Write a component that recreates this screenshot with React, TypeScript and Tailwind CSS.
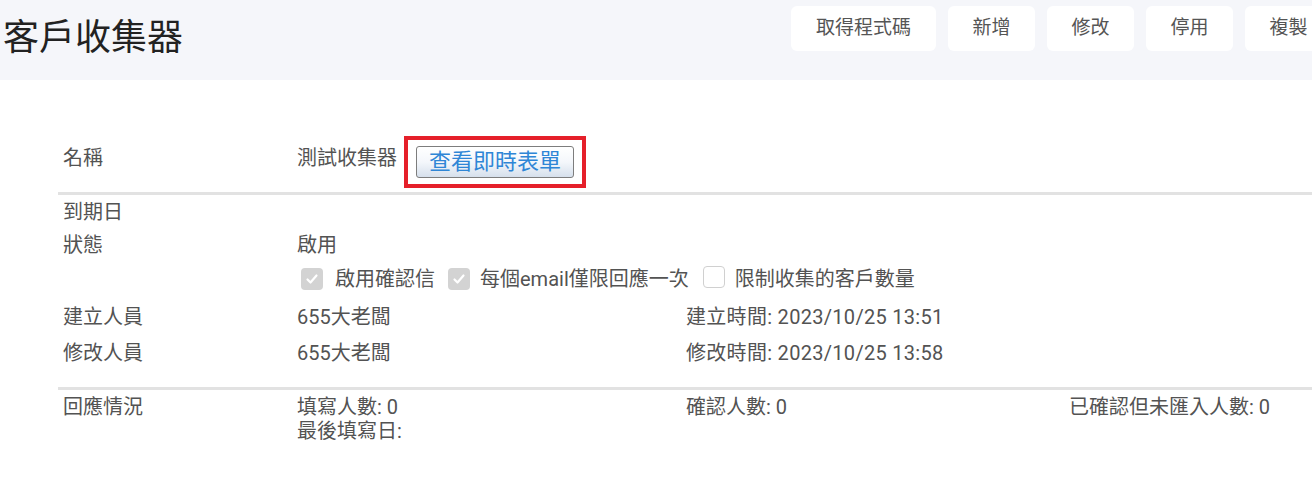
import React from "react";

const font = { fontFamily: '"Roboto", "Noto Sans CJK TC", sans-serif' };

function Check({ checked }: { checked: boolean }) {
  return checked ? (
    <span className="inline-flex h-[22px] w-[22px] shrink-0 items-center justify-center rounded-[4px] bg-[#d3d3d3]">
      <svg width="14" height="14" viewBox="0 0 14 14" fill="none">
        <path d="M2.5 7.5 L5.5 10.5 L11.5 3.5" stroke="#ffffff" strokeWidth="2.2" strokeLinecap="round" strokeLinejoin="round" />
      </svg>
    </span>
  ) : (
    <span className="inline-block h-[22px] w-[22px] shrink-0 rounded-[4px] border border-[#d0d0d0] bg-white" />
  );
}

function HeaderBtn({ children, w }: { children: React.ReactNode; w: string }) {
  return (
    <div className={`flex h-[45px] shrink-0 items-center justify-center rounded-[6px] bg-white text-[19px] text-[#555] ${w}`}>
      {children}
    </div>
  );
}

export default function App() {
  return (
    <div className="h-[490px] w-[1312px] overflow-hidden bg-white" style={font}>
      {/* header */}
      <div className="flex h-[80px] items-start bg-[#f5f6fa]">
        <div className="w-[791px] shrink-0 pl-[3px] pt-[14px] text-[36px] leading-[48px] text-[#222]">客戶收集器</div>
        <div className="mt-[6px] flex shrink-0 gap-[12px]">
          <HeaderBtn w="w-[145px]">取得程式碼</HeaderBtn>
          <HeaderBtn w="w-[87px]">新增</HeaderBtn>
          <HeaderBtn w="w-[87px]">修改</HeaderBtn>
          <HeaderBtn w="w-[87px]">停用</HeaderBtn>
          <HeaderBtn w="w-[87px]">複製</HeaderBtn>
        </div>
      </div>

      {/* table */}
      <div className="ml-[58px] mt-[56px] text-[20px] leading-[24px] text-[#535353]">
        {/* row 1 */}
        <div className="flex h-[56px] items-start">
          <div className="w-[239px] shrink-0 pl-[5px] pt-[10px]">名稱</div>
          <div className="flex items-start">
            <span className="pt-[10px]">測試收集器</span>
            <div className="ml-[7px] border-4 border-[#e5202a] px-[8px] py-[6px]">
              <div className="flex h-[32px] w-[158px] items-center justify-center rounded-[3px] border border-[#7d7d7d] bg-gradient-to-b from-[#ffffff] via-[#f4f7fb] to-[#d6e0ec] text-[22px] text-[#2f86d6]">
                查看即時表單
              </div>
            </div>
          </div>
        </div>
        <div className="h-[3px] bg-[#e2e2e2]" />

        <div className="flex h-[33px] items-center">
          <div className="w-[239px] shrink-0 pl-[5px]">到期日</div>
        </div>
        <div className="flex h-[33px] items-center">
          <div className="w-[239px] shrink-0 pl-[5px]">狀態</div>
          <div>啟用</div>
        </div>
        <div className="flex h-[36px] items-center">
          <div className="w-[239px] shrink-0 pl-[5px]" />
          <div className="flex items-center">
            <span className="ml-[4px]"><Check checked /></span>
            <span className="ml-[12px]">啟用確認信</span>
            <span className="ml-[13px]"><Check checked /></span>
            <span className="ml-[10px]">每個email僅限回應一次</span>
            <span className="ml-[14px]"><Check checked={false} /></span>
            <span className="ml-[10px]">限制收集的客戶數量</span>
          </div>
        </div>
        <div className="flex h-[40px] items-center">
          <div className="w-[239px] shrink-0 pl-[5px]">建立人員</div>
          <div className="w-[389px] shrink-0">655大老闆</div>
          <div className="tracking-[0.3px]">建立時間: 2023/10/25 13:51</div>
        </div>
        <div className="mb-[18px] flex h-[32px] items-center">
          <div className="w-[239px] shrink-0 pl-[5px]">修改人員</div>
          <div className="w-[389px] shrink-0">655大老闆</div>
          <div className="tracking-[0.3px]">修改時間: 2023/10/25 13:58</div>
        </div>
        <div className="h-[3px] bg-[#e2e2e2]" />

        <div className="flex pt-[5px]">
          <div className="w-[239px] shrink-0 pl-[5px]">回應情況</div>
          <div className="w-[389px] shrink-0">
            <div>填寫人數: 0</div>
            <div>最後填寫日:</div>
          </div>
          <div className="w-[383px] shrink-0">確認人數: 0</div>
          <div>已確認但未匯入人數: 0</div>
        </div>
      </div>
    </div>
  );
}
